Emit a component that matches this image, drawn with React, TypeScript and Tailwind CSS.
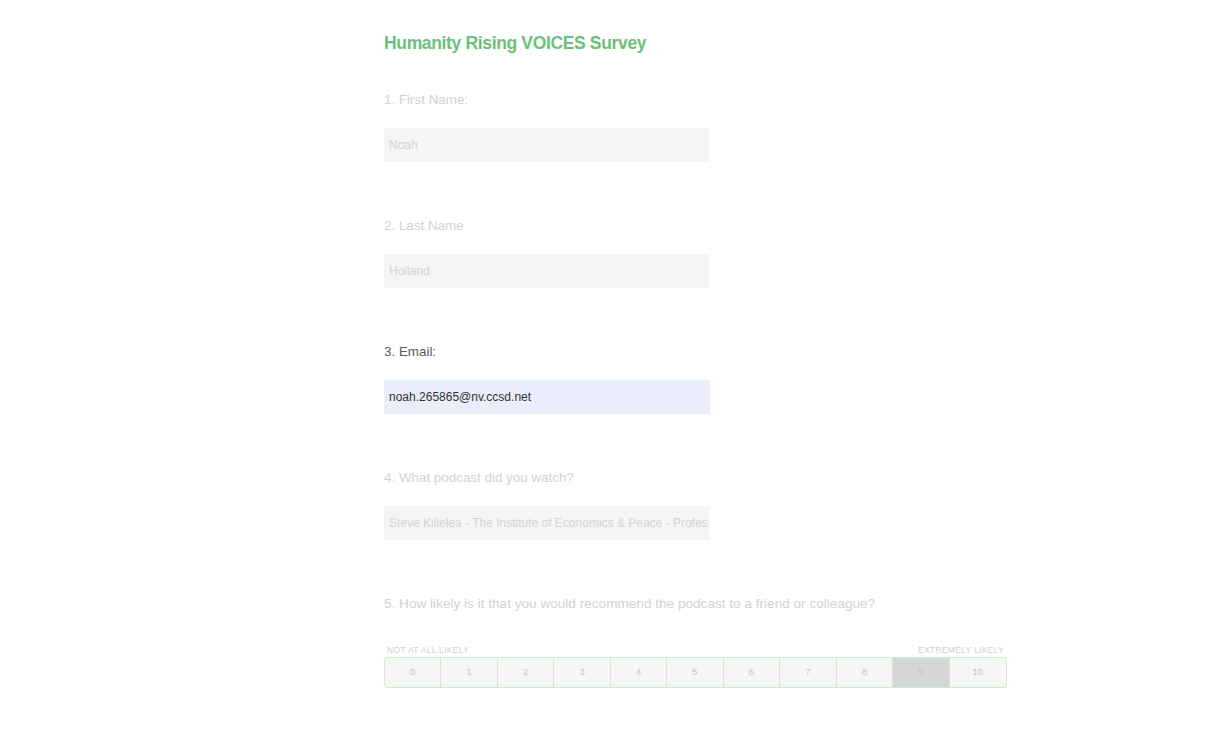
const questions = [
  { label: "1. First Name:", value: "Noah" },
  { label: "2. Last Name", value: "Holland" },
  { label: "3. Email:", value: "noah.265865@nv.ccsd.net", active: true },
  { label: "4. What podcast did you watch?", value: "Steve Killelea - The Institute of Economics & Peace - Profes" },
]

const scale = [0, 1, 2, 3, 4, 5, 6, 7, 8, 9, 10]

export default function App() {
  return (
    <div className="min-h-[738px] bg-white font-['Liberation_Sans',Arial,sans-serif]">
      <div className="ml-[384px] w-[623px] pt-[32px]">
        <h1 className="text-[17.5px] leading-[22px] font-bold text-[#6cbf79] tracking-[-0.35px]">
          Humanity Rising VOICES Survey
        </h1>

        <div className="mt-[38px] flex flex-col gap-[56px]">
          {questions.map((q) => (
            <div key={q.label}>
              <div className={`text-[13.4px] leading-[16px] ${q.active ? "text-[#555a5f]" : "text-[#d2d2d2]"}`}>
                {q.label}
              </div>
              <div
                className={`mt-[20px] h-[34px] w-[326px] flex items-center px-[5px] whitespace-nowrap text-[12px] ${
                  q.active ? "bg-[#e9eefa] text-[#333]" : "bg-[#f5f5f5] text-[#d4d4d4]"
                }`}
              >
                {q.value}
              </div>
            </div>
          ))}

          <div>
            <div className="text-[13.6px] leading-[16px] text-[#d2d2d2]">
              5. How likely is it that you would recommend the podcast to a friend or colleague?
            </div>
            <div className="mt-[33px] flex justify-between px-[3px] text-[8.5px] leading-[10px] tracking-[0.3px] text-[#cfcfcf]">
              <span>NOT AT ALL LIKELY</span>
              <span>EXTREMELY LIKELY</span>
            </div>
            <div className="mt-[2px] grid grid-cols-11 h-[31px] border border-[#cfeccf] rounded-[3px] overflow-hidden">
              {scale.map((n) => (
                <div
                  key={n}
                  className={`flex items-center justify-center text-[9.5px] border-[#cfeccf] ${
                    n < 10 ? "border-r" : ""
                  } ${n === 9 ? "bg-[#d6d6d6] text-[#c4c4c4]" : "bg-[#f6f6f6] text-[#c6c6c6]"}`}
                >
                  {n}
                </div>
              ))}
            </div>
          </div>
        </div>
      </div>
    </div>
  )
}
